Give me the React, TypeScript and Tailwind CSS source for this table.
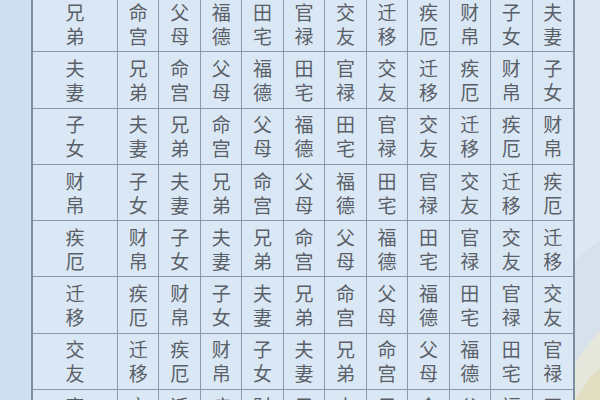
const palaces = ["命宫", "父母", "福德", "田宅", "官禄", "交友", "迁移", "疾厄", "财帛", "子女", "夫妻", "兄弟"];

const Cell = ({ text }: { text: string }) => (
  <div className="bg-[#dae8f6] flex flex-col items-center justify-center text-[19px] leading-[24px] text-[#5a6067]">
    <span>{text[0]}</span>
    <span>{text[1]}</span>
  </div>
);

export default function App() {
  const rows = Array.from({ length: 8 }, (_, r) => ({
    head: palaces[(11 - r + 12) % 12],
    cells: Array.from({ length: 11 }, (_, j) => palaces[(j - r + 12) % 12]),
  }));

  return (
    <div
      className="relative w-[600px] h-[400px] overflow-hidden bg-gradient-to-r from-[#cde0f1] via-[#d6e5f4] to-[#dde8f2]"
      style={{ fontFamily: '"Noto Sans CJK SC", "Noto Sans", sans-serif' }}
    >
      {/* faint landscape behind the right side */}
      <svg className="absolute right-0 bottom-0" width="120" height="220" viewBox="0 0 120 220">
        <path d="M0 220 L40 150 L70 110 L95 80 L120 60 L120 220 Z" fill="#cfdae5" opacity="0.5" />
        <path d="M70 220 L100 175 L120 150 L120 220 Z" fill="#ece9d6" opacity="0.7" />
        <path d="M95 220 L112 195 L120 188 L120 220 Z" fill="#e0d8b0" opacity="0.6" />
      </svg>

      <div className="relative ml-[31px] -mt-[6px] w-[544px] border-2 border-[#7b8ea3] bg-[#8899ad]">
        <div className="grid grid-cols-[84px_repeat(11,minmax(0,1fr))] auto-rows-[55.3px] gap-px">
          {rows.map((row, r) => (
            <div key={r} className="contents">
              <Cell text={row.head} />
              {row.cells.map((c, j) => (
                <Cell key={j} text={c} />
              ))}
            </div>
          ))}
        </div>
      </div>
    </div>
  );
}
